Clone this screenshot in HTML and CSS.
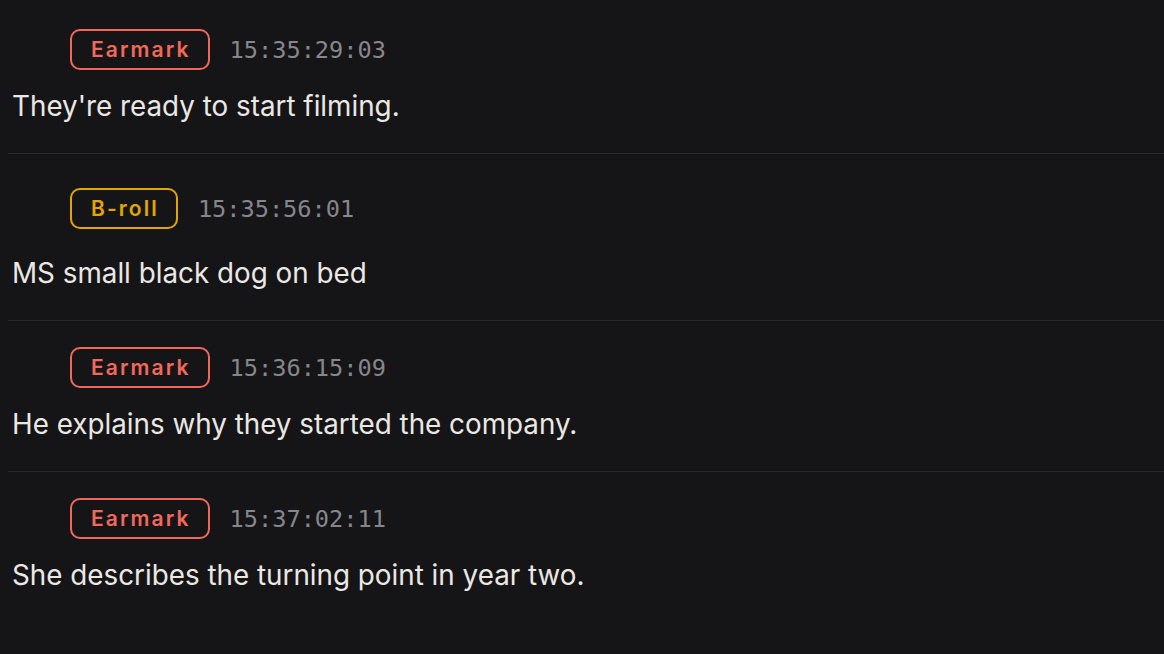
FILE: index.html
```html
<!DOCTYPE html>
<html lang="en">
<head>
<meta charset="utf-8">
<title>Log</title>
<link rel="stylesheet" href="styles.css">
</head>
<body>
<main class="log">
  <section class="entry entry--first">
    <div class="entry-head">
      <span class="tag tag--earmark">Earmark</span>
      <span class="timecode">15:35:29:03</span>
    </div>
    <p class="entry-text">They're ready to start filming.</p>
  </section>
  <section class="entry entry--tall">
    <div class="entry-head">
      <span class="tag tag--broll">B-roll</span>
      <span class="timecode">15:35:56:01</span>
    </div>
    <p class="entry-text">MS small black dog on bed</p>
  </section>
  <section class="entry">
    <div class="entry-head">
      <span class="tag tag--earmark">Earmark</span>
      <span class="timecode">15:36:15:09</span>
    </div>
    <p class="entry-text">He explains why they started the company.</p>
  </section>
  <section class="entry entry--last">
    <div class="entry-head">
      <span class="tag tag--earmark">Earmark</span>
      <span class="timecode">15:37:02:11</span>
    </div>
    <p class="entry-text">She describes the turning point in year two.</p>
  </section>
</main>
</body>
</html>
```
FILE: styles.css
```css
html, body {
  margin: 0;
  padding: 0;
  background: #151517;
}

body {
  font-family: Inter, "Noto Sans", sans-serif;
  color: #ebe8e4;
  min-height: 654px;
}

.log {
  display: flex;
  flex-direction: column;
  padding-left: 8px;
}

.entry {
  display: flex;
  flex-direction: column;
  padding: 26px 0 31px 4px;
  border-bottom: 1px solid #2a2a2d;
}

.entry--first {
  padding-top: 29px;
}

.entry--last {
  border-bottom: none;
}

.entry-head {
  display: flex;
  align-items: center;
  gap: 20px;
  margin-left: 58px;
  height: 41px;
}

.entry--tall .entry-head {
  height: 57px;
}

.tag {
  box-sizing: border-box;
  height: 41px;
  display: inline-flex;
  align-items: center;
  padding: 0 17px 0 19px;
  border: 2px solid currentColor;
  border-radius: 10px;
  font-size: 21px;
  font-weight: 600;
  letter-spacing: 2.1px;
}

.tag--earmark {
  color: #f2685a;
}

.tag--broll {
  color: #e3a600;
}

.timecode {
  font-family: "DejaVu Sans Mono", "Liberation Mono", monospace;
  font-size: 23.6px;
  color: #87878b;
}

.entry-text {
  margin: 20px 0 0;
  font-size: 27.8px;
  line-height: 32px;
}
```
